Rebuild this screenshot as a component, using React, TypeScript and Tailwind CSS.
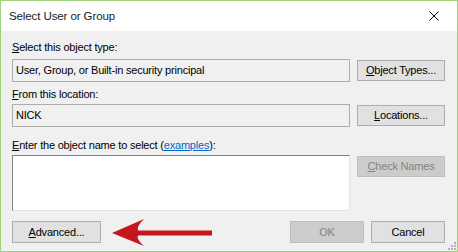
import React from "react";

const U = ({ children }: { children: React.ReactNode }) => (
  <span className="underline underline-offset-[1px] decoration-[1px]">{children}</span>
);

export default function App() {
  return (
    <div
      className="relative w-[458px] h-[252px] border border-[#9fd07a] bg-[#f0f0f0] flex flex-col text-[11px] tracking-[-0.2px] leading-[15px] text-black overflow-hidden"
      style={{ fontFamily: '"Liberation Sans", Arial, sans-serif' }}
    >
      {/* Title bar */}
      <div className="h-[30px] bg-white flex items-center justify-between pl-[8px] shrink-0">
        <span className="text-[11.5px] tracking-[-0.1px] mt-[1px] text-[#1a1a1a]">Select User or Group</span>
        <div className="w-[46px] h-[30px] flex items-center justify-center">
          <svg width="10" height="10" viewBox="0 0 10 10">
            <path d="M0.5 0.5 L9.5 9.5 M9.5 0.5 L0.5 9.5" stroke="#000" strokeWidth="1" />
          </svg>
        </div>
      </div>

      {/* Body */}
      <div className="flex flex-col pl-[11px] pr-[12px]">
        <div className="mt-[9px]">
          <U>S</U>elect this object type:
        </div>
        <div className="mt-[4px] flex items-start justify-between">
          <div className="w-[338px] h-[23px] border border-[#adadad] bg-[#f0f0f0] flex items-center pl-[3px]">
            User, Group, or Built-in security principal
          </div>
          <button className="mt-[1px] w-[88px] h-[21px] border border-[#adadad] bg-[#e1e1e1] flex items-center justify-center">
            <U>O</U>bject Types...
          </button>
        </div>

        <div className="mt-[5px]">
          <U>F</U>rom this location:
        </div>
        <div className="mt-[2px] flex items-start justify-between">
          <div className="w-[338px] h-[23px] border border-[#adadad] bg-[#f0f0f0] flex items-center pl-[3px]">
            NICK
          </div>
          <button className="mt-[1px] w-[88px] h-[21px] border border-[#adadad] bg-[#e1e1e1] flex items-center justify-center">
            <U>L</U>ocations...
          </button>
        </div>

        <div className="mt-[11px]">
          <U>E</U>nter the object name to select (
          <span className="text-[#0066cc] underline underline-offset-[1px]">examples</span>):
        </div>
        <div className="mt-[2px] flex items-start justify-between">
          <div className="w-[338px] h-[56px] bg-white border border-t-[#828282] border-l-[#828282] border-r-[#e3e3e3] border-b-[#e3e3e3]" />
          <button className="mt-[1px] w-[88px] h-[21px] border border-[#bfbfbf] bg-[#cccccc] text-[#838383] flex items-center justify-center">
            <U>C</U>heck Names
          </button>
        </div>

        <div className="mt-[10px] flex items-start">
          <button className="w-[89px] h-[22px] border border-[#adadad] bg-[#e1e1e1] flex items-center justify-center">
            <U>A</U>dvanced...
          </button>
          <div className="flex-1" />
          <button className="w-[74px] h-[22px] border border-[#bfbfbf] bg-[#cccccc] text-[#838383] flex items-center justify-center">
            OK
          </button>
          <button className="ml-[7px] w-[74px] h-[22px] border border-[#adadad] bg-[#e1e1e1] flex items-center justify-center">
            Cancel
          </button>
        </div>
      </div>

      {/* Red annotation arrow */}
      <svg className="absolute left-[0px] top-[0px] pointer-events-none" width="458" height="252" viewBox="0 0 458 252">
        <path
          d="M111 232 L143 218 Q135 226 137 229.5 L211 229.5 L211 234.5 L137 234.5 Q135 238 143 245 Z"
          fill="#c4161c"
        />
      </svg>

      {/* Size grip */}
      <svg className="absolute right-[1px] bottom-[1px]" width="9" height="9" viewBox="0 0 9 9">
        <rect x="7" y="1" width="2" height="2" fill="#b4b4b4" />
        <rect x="4" y="4" width="2" height="2" fill="#b4b4b4" />
        <rect x="7" y="4" width="2" height="2" fill="#b4b4b4" />
        <rect x="1" y="7" width="2" height="2" fill="#b4b4b4" />
        <rect x="4" y="7" width="2" height="2" fill="#b4b4b4" />
        <rect x="7" y="7" width="2" height="2" fill="#b4b4b4" />
      </svg>
    </div>
  );
}
